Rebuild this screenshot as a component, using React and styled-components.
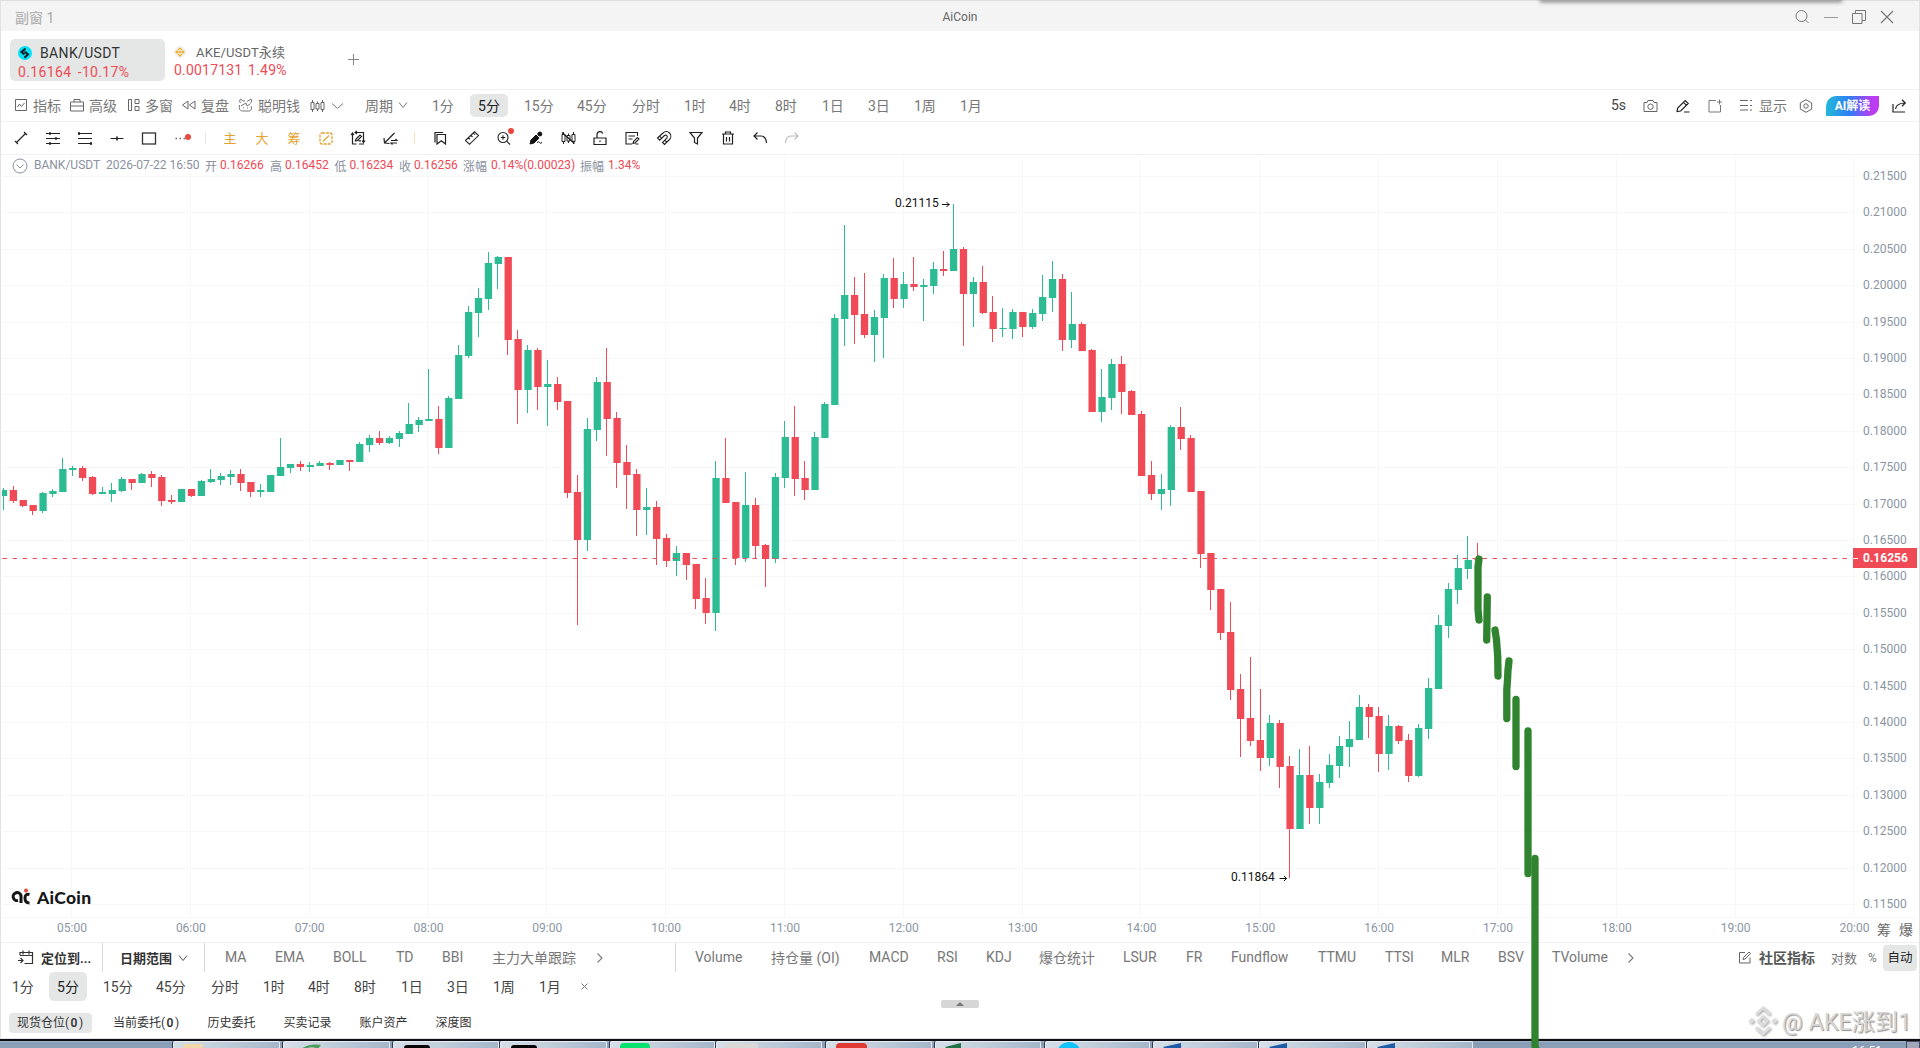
import styled, { createGlobalStyle, css } from 'styled-components';

const UP = '#2dbb93';
const DOWN = '#ef4a55';

const GlobalStyle = createGlobalStyle`
  * { box-sizing: border-box; }
  html, body { margin: 0; padding: 0; overflow: hidden; }
  body {
    font-family: Roboto, "Noto Sans CJK SC", sans-serif;
    font-size: 14px;
    color: #777;
    background: #fff;
  }
`;

let Window = styled.div`
  position: relative;
  display: flex;
  flex-direction: column;
  width: 1920px;
  height: 1048px;
  overflow: hidden;
  background: #fff;
`;

let Frame = styled.div`
  display: flex;
  flex-direction: column;
  height: 1039px;
  border: 1px solid #e2e2e2;
  border-top: 1px solid #dedede;
`;

// top bar
let TitleBar = styled.div`
  position: relative;
  display: flex;
  align-items: center;
  justify-content: space-between;
  height: 30px;
  padding: 1px 24px 0 14px;
  background: #f4f4f4;
  color: #aaa;
`;

let TitleText = styled.div`
  font-size: 12px;
  color: #666;
  flex: 1;
  padding-left: 10px;
  text-align: center;
`;

let TitleSide = styled.div`
  display: flex;
  align-items: center;
  justify-content: ${props => props.$end ? 'flex-end' : 'flex-start'};
  gap: 12px;
  width: 160px;
`;

let WindowShadow = styled.div`
  position: absolute;
  top: -2px;
  left: 1540px;
  width: 300px;
  height: 2px;
  background: #a5a5a5;
  box-shadow: 0 0 4px 1px #777;
`;

// coin tabs
let CoinTabs = styled.div`
  display: flex;
  align-items: flex-start;
  height: 59px;
  padding: 8px 0 0 9px;
  border-bottom: 1px solid #f0f0f0;
`;

let CoinTab = styled.div`
  width: ${props => props.$w}px;
  height: 42px;
  padding: ${props => props.$active ? '5px 0 0 8px' : '4px 0 0 9px'};
  border-radius: 5px;
  background: ${props => props.$active ? '#e5e7e7' : 'none'};
`;

let CoinName = styled.div`
  display: flex;
  align-items: center;
  gap: ${props => props.$gap}px;
  height: ${props => props.$active ? 18 : 17}px;
  font-size: ${props => props.$active ? 14 : 13}px;
  color: ${props => props.$active ? '#333' : '#666'};
  letter-spacing: ${props => props.$active ? 0.35 : 0.15}px;
  white-space: nowrap;
`;

let CoinPrice = styled.div`
  height: 20px;
  line-height: 20px;
  color: ${DOWN};
  letter-spacing: ${props => props.$ls}px;
  word-spacing: ${props => props.$ws}px;
  white-space: pre;
`;

let AddTab = styled.div`
  padding: 14px 0 0 60px;
  line-height: 0;
`;

// toolbars
let Toolbar = styled.div`
  display: flex;
  align-items: center;
  height: ${props => props.$h || 32}px;
  padding-left: ${props => props.$pl || 0}px;
  border-bottom: 1px solid #f1f1f1;
`;

let Tool = styled.div`
  display: flex;
  align-items: center;
  width: ${props => props.$w}px;
  gap: ${props => props.$gap || 0}px;
  height: 24px;
  padding-bottom: ${props => props.$lift ? 1 : 0}px;
  white-space: nowrap;
  font-size: ${props => props.$size || 14}px;
  color: ${props => props.$color || '#777'};
  font-weight: ${props => props.$bold ? 700 : 400};
`;

let Period = styled.div`
  display: flex;
  align-items: center;
  flex: none;
  width: ${props => props.$w}px;
  height: ${props => props.$h || 23}px;
  padding-bottom: 2px;
  white-space: nowrap;
  color: ${props => props.$color || '#777'};
  ${props => props.$active && css`
    justify-content: center;
    color: #222;
    background: #e5e7e7;
    border-radius: 5px;
    margin: 0 ${props.$mr}px 0 -8px;
  `}
`;

let Spacer = styled.div`
  flex: 1;
`;

let AiButton = styled.div`
  width: 53px;
  height: 20px;
  margin-right: 13px;
  line-height: 20px;
  text-align: center;
  font-size: 12px;
  font-weight: 700;
  color: #fff;
  border-radius: 10px 0 10px 0;
  background: linear-gradient(90deg, #22b9d8 0%, #2f7df5 45%, #b63df5 85%, #c23af0 100%);
`;

let DrawCell = styled.div`
  position: relative;
  display: flex;
  align-items: center;
  justify-content: center;
  width: 32px;
  height: 24px;
  padding-bottom: ${props => props.$gold ? 1 : 0}px;
  font-size: 13px;
  color: ${props => props.$gold ? '#e3a32f' : '#222'};
`;

let DrawDivider = styled.div`
  width: 1px;
  height: 12px;
  margin: 0 ${props => props.$mr || 8}px 0 8px;
  background: ${props => props.$color || '#e4e8ee'};
`;

let RedDot = styled.i`
  position: absolute;
  top: ${props => props.$top}px;
  right: 6px;
  width: 6px;
  height: 6px;
  border-radius: 50%;
  background: #e8483f;
`;

// chart
let ChartArea = styled.div`
  position: relative;
  height: 787px;
`;

let ChartInfo = styled.div`
  position: absolute;
  top: 1px;
  left: 11px;
  display: flex;
  align-items: center;
  height: 18px;
  font-size: 12px;
  color: #8a91a0;
  white-space: nowrap;
  svg { margin-right: 6px; position: relative; top: 1px; }
`;

let InfoPart = styled.span`
  width: ${props => props.$w}px;
  color: ${props => props.$red ? DOWN : '#8a91a0'};
`;

let ChartSvg = styled.svg`
  display: block;
  margin-left: -1px;
  font-family: Roboto, "Noto Sans CJK SC", sans-serif;
  font-size: 12px;
`;

let Logo = styled.div`
  position: absolute;
  left: 10px;
  top: 730px;
  display: flex;
  align-items: center;
  gap: 6px;
  height: 24px;
  font-family: Lato, sans-serif;
  font-weight: 900;
  font-size: 17.5px;
  letter-spacing: 0.3px;
  color: #161616;
`;

// bottom
let IndicatorBar = styled.div`
  display: flex;
  align-items: center;
  height: 30px;
  padding-left: 16px;
  border-top: 1px solid #efefef;
`;

let Divider = styled.div`
  width: 1px;
  height: 29px;
  background: #d9d9d9;
  margin-right: ${props => props.$mr}px;
`;

let AutoButton = styled.div`
  width: 34px;
  height: 26px;
  margin-right: 2px;
  line-height: 25px;
  text-align: center;
  font-size: 12.5px;
  color: #222;
  border-radius: 4px;
  background: #e5e7e7;
`;

let BottomPeriods = styled.div`
  display: flex;
  align-items: center;
  height: 29px;
  padding-left: 11px;
`;

let PanelHandle = styled.div`
  width: 38px;
  height: 8px;
  margin: -1px auto 0 940px;
  border-radius: 2px;
  background: #d6d6d6;
  line-height: 0;
  text-align: center;
`;

let OrderTabs = styled.div`
  display: flex;
  align-items: center;
  height: 20px;
  margin-top: 5px;
  padding-left: 8px;
  font-size: 12px;
  color: #333;
`;

let OrderTab = styled.div`
  height: 20px;
  line-height: 21px;
  width: ${props => props.$w}px;
  flex: none;
  white-space: nowrap;
  ${props => props.$active && css`
    padding-left: 8px;
    margin-right: 21px;
    border-radius: 4px;
    background: #e5e7e7;
  `}
  b { font-weight: 600; letter-spacing: 1.5px; margin-left: 1.5px; }
`;

let Watermark = styled.div`
  position: absolute;
  left: 1748px;
  top: 1004px;
  display: flex;
  align-items: center;
  gap: 4px;
  height: 32px;
  font-size: 23px;
  letter-spacing: 0.2px;
  color: #d6d6d6;
  text-shadow: 1px 1px 1px #8f8f8f;
  white-space: nowrap;
  svg { position: relative; top: 1px; filter: drop-shadow(1px 1px 1px #9a9a9a); }
`;

let Marker = styled.svg`
  position: absolute;
  left: 1460px;
  top: 540px;
  pointer-events: none;
`;

let Taskbar = styled.div`
  display: flex;
  height: 9px;
  border-top: 2px solid #0b0d12;
  background: linear-gradient(#a3b4c8 0, #879cb6 2px, #8ba1ba 100%);
  overflow: hidden;
`;

let TaskStart = styled.div`
  width: 173px;
  height: 7px;
  flex: none;
`;

let TaskButton = styled.div`
  flex: none;
  width: ${props => props.$w}px;
  height: 8px;
  border: 1px solid #e8edf3;
  border-bottom: 0;
  border-radius: 2px 2px 0 0;
  box-shadow: -1px 0 0 #2c3648;
  margin-right: ${props => props.$mr}px;
  padding-left: 9px;
  line-height: 0;
  background: linear-gradient(100deg, #d6dfe8 0%, #bccad8 55%, #a5b6cb 100%);
`;

let TrayClock = styled.div`
  flex: 1;
  padding: 3px 0 0 378px;
  font-size: 12px;
  line-height: 14px;
  color: #fff;
`;

let ShowDesktop = styled.div`
  width: 14px;
  height: 8px;
  border: 1px solid #454f60;
  background: #a1a7b8;
`;

let Svg = styled.svg`
  flex: none;
`;

function Icon({ w = 16, h = 16, color = 'currentColor', sw = 1, children, fill = 'none' }) {
  return (
    <Svg width={w} height={h} viewBox={`0 0 ${w} ${h}`} fill={fill} stroke={color} strokeWidth={sw}>
      {children}
    </Svg>
  );
}

function Chevron({ w = 12, color = '#777' }) {
  return (
    <Icon w={w} h={8} color={color}><path d={`M1 1.5 L${w / 2} 6.5 L${w - 1} 1.5`} /></Icon>
  );
}

function ChevronRight() {
  return <Icon w={8} h={12} sw={1.1}><path d="M1.5 1.5 L6 6 L1.5 10.5" /></Icon>;
}

// [direction, high, body top, body bottom, low], 5 minutes each, from 04:25
let candles = [
  ['u', 488, 490, 496, 510], ['d', 486, 490, 501, 503], ['d', 500, 500, 506, 507], ['d', 505, 505, 511, 515],
  ['u', 492, 493, 511, 513], ['u', 489, 491, 494, 497], ['u', 458, 469, 492, 492], ['u', 466, 468, 470, 476],
  ['d', 466, 468, 478, 481], ['d', 476, 477, 494, 495], ['u', 487, 492, 494, 494], ['u', 483, 490, 494, 502],
  ['u', 477, 479, 491, 492], ['d', 479, 479, 483, 490], ['u', 473, 474, 483, 483], ['d', 471, 474, 478, 487],
  ['d', 475, 477, 501, 506], ['d', 495, 500, 502, 504], ['u', 489, 489, 502, 502], ['d', 489, 489, 496, 497],
  ['u', 480, 481, 496, 496], ['u', 469, 479, 482, 483], ['u', 473, 476, 480, 485], ['u', 470, 474, 477, 485],
  ['d', 469, 474, 483, 491], ['d', 482, 482, 492, 497], ['u', 484, 490, 492, 497], ['u', 475, 475, 492, 492],
  ['u', 438, 467, 476, 476], ['u', 464, 464, 468, 473], ['d', 461, 464, 467, 471], ['u', 462, 465, 467, 472],
  ['u', 461, 463, 466, 466], ['d', 462, 463, 465, 470], ['u', 460, 460, 465, 465], ['d', 460, 460, 462, 471],
  ['u', 442, 444, 462, 462], ['u', 435, 438, 445, 452], ['d', 431, 438, 443, 445], ['u', 436, 438, 443, 444],
  ['u', 431, 433, 439, 447], ['u', 403, 424, 434, 434], ['u', 417, 420, 425, 432], ['u', 369, 419, 421, 421],
  ['d', 406, 419, 448, 454], ['u', 396, 398, 448, 448], ['u', 345, 355, 399, 399], ['u', 306, 312, 356, 358],
  ['u', 288, 298, 313, 337], ['u', 252, 263, 299, 310], ['u', 256, 257, 264, 289], ['d', 257, 257, 340, 355],
  ['d', 330, 339, 390, 424], ['u', 345, 350, 390, 413], ['d', 348, 350, 387, 410], ['u', 360, 384, 387, 426],
  ['d', 377, 384, 402, 410], ['d', 401, 401, 493, 498], ['d', 475, 492, 540, 625], ['u', 418, 429, 540, 551],
  ['u', 377, 382, 430, 441], ['d', 348, 382, 419, 456], ['d', 412, 418, 463, 488], ['d', 445, 462, 475, 509],
  ['d', 469, 474, 510, 536], ['u', 488, 507, 510, 535], ['d', 501, 507, 539, 565], ['d', 534, 538, 561, 567],
  ['u', 546, 553, 561, 576], ['d', 553, 553, 565, 580], ['d', 564, 564, 599, 609], ['d', 578, 598, 613, 624],
  ['u', 461, 478, 613, 631], ['d', 438, 478, 503, 503], ['d', 502, 502, 558, 565], ['u', 472, 505, 558, 562],
  ['d', 498, 505, 546, 559], ['d', 544, 545, 559, 587], ['u', 473, 477, 559, 563], ['u', 421, 437, 478, 488],
  ['d', 406, 437, 479, 496], ['d', 461, 478, 490, 500], ['u', 432, 437, 490, 490], ['u', 402, 404, 438, 438],
  ['u', 314, 318, 405, 405], ['u', 225, 295, 319, 346], ['d', 277, 295, 315, 344], ['d', 273, 314, 335, 338],
  ['u', 310, 317, 335, 362], ['u', 274, 278, 318, 358], ['d', 258, 278, 299, 308], ['u', 272, 284, 299, 308],
  ['d', 257, 284, 287, 291], ['u', 279, 285, 287, 321], ['u', 262, 269, 286, 294], ['d', 251, 269, 271, 276],
  ['u', 204, 249, 271, 271], ['d', 247, 249, 294, 346], ['u', 277, 282, 294, 327], ['d', 266, 282, 313, 314],
  ['d', 296, 312, 329, 342], ['u', 308, 328, 329, 337], ['u', 309, 312, 329, 339], ['d', 312, 312, 327, 337],
  ['u', 309, 313, 327, 329], ['u', 275, 297, 314, 321], ['u', 261, 279, 298, 312], ['d', 274, 279, 340, 351],
  ['u', 292, 324, 340, 348], ['d', 322, 324, 351, 351], ['d', 349, 350, 412, 412], ['u', 369, 397, 412, 422],
  ['u', 359, 364, 398, 410], ['d', 356, 364, 392, 414], ['d', 390, 391, 415, 415], ['d', 411, 414, 476, 476],
  ['d', 461, 475, 494, 500], ['u', 474, 489, 494, 510], ['u', 425, 427, 490, 506], ['d', 407, 427, 439, 450],
  ['d', 435, 438, 492, 492], ['d', 491, 491, 554, 568], ['d', 553, 553, 590, 610], ['d', 589, 589, 633, 640],
  ['d', 602, 632, 690, 700], ['d', 674, 689, 719, 757], ['d', 657, 718, 741, 746], ['d', 689, 740, 758, 771],
  ['u', 715, 723, 758, 766], ['d', 720, 723, 767, 788], ['d', 756, 766, 829, 878], ['u', 749, 775, 829, 829],
  ['d', 746, 775, 808, 824], ['u', 774, 782, 808, 824], ['u', 754, 765, 783, 788], ['u', 736, 746, 766, 778],
  ['u', 721, 739, 747, 767], ['u', 695, 707, 740, 740], ['d', 704, 707, 717, 738], ['d', 707, 716, 754, 772],
  ['u', 715, 726, 754, 770], ['d', 725, 726, 741, 744], ['d', 734, 740, 776, 782], ['u', 724, 728, 776, 777],
  ['u', 678, 688, 729, 739], ['u', 615, 625, 689, 689], ['u', 583, 589, 626, 638], ['u', 555, 568, 590, 604],
  ['u', 536, 560, 569, 579], ['d', 543, 558, 560, 570],
];

let hours = Array.from({ length: 16 }, (_, i) => String(i + 5).padStart(2, '0') + ':00');
let prices = Array.from({ length: 21 }, (_, i) => (0.215 - i * 0.005).toFixed(5));

function Chart() {
  return (
    <ChartSvg width="1919" height="787" viewBox="0 155 1919 787">
      <g fill="#f7f7f7">
        {hours.map((t, i) => <rect key={t} x={Math.floor(71.4 + i * 118.83)} y="157" width="1" height="761" />)}
        {prices.map((p, i) => <rect key={p} x="2" y={Math.round(176 + i * 36.4)} width="1856" height="1" />)}
        <rect x="2" y="917" width="1914" height="1" />
      </g>
      {candles.map(([dir, high, top, bottom, low], i) => {
        let x = 72.4 + (i - 7) * 9.897;
        let left = Math.max(2, x - 3.3);
        return (
          <g key={i} fill={dir == 'u' ? UP : DOWN}>
            <rect x={Math.floor(x)} y={high} width="1" height={low - high} />
            <rect x={left} y={top} width={x + 4 - left} height={bottom - top} />
          </g>
        );
      })}
      <path d="M2.5 558.5 H1853" stroke={DOWN} strokeDasharray="4.5 5.5" />
      <g fill="#8a95a3">
        {prices.map((p, i) => <text key={p} x="1863" y={180 + i * 36.4}>{p}</text>)}
        {hours.map((t, i) => <text key={t} x={72 + i * 118.83} y="932" textAnchor="middle">{t}</text>)}
      </g>
      <rect x="1853" y="548" width="64" height="20" fill={DOWN} />
      <path d="M1853 558.5 h5" stroke="#fff" />
      <text x="1863" y="562" fill="#fff" fontWeight="700">0.16256</text>
      <g fill="#111">
        <text x="895" y="207">0.21115</text>
        <text x="1231" y="881">0.11864</text>
      </g>
      <g stroke="#111" fill="none">
        <path d="M942 204.5 h7.500 M946.500 202 l2.500 2.500 l-2.500 2.500" />
        <path d="M1279.500 878.500 h7.500 M1284 876 l2.500 2.500 l-2.500 2.500" />
      </g>
      <g fill="#666" fontSize="14">
        <text x="1877" y="935">筹</text>
        <text x="1899" y="935">爆</text>
      </g>
    </ChartSvg>
  );
}

// [label, width up to the next label]
let topPeriods = [
  ['1分', 46], ['5分', 38, 16], ['15分', 53], ['45分', 55], ['分时', 52], ['1时', 45], ['4时', 46],
  ['8时', 47], ['1日', 46], ['3日', 46], ['1周', 46], ['1月', 40],
];
let bottomPeriods = [
  ['1分', 45], ['5分', 38, 16], ['15分', 53], ['45分', 55], ['分时', 52], ['1时', 45], ['4时', 46],
  ['8时', 47], ['1日', 46], ['3日', 46], ['1周', 46], ['1月', 41],
];
let mainIndicators = [['MA', 50], ['EMA', 58], ['BOLL', 63], ['TD', 46], ['BBI', 50], ['主力大单跟踪', 104]];
let subIndicators = [
  ['Volume', 76], ['持仓量 (OI)', 98], ['MACD', 68], ['RSI', 49], ['KDJ', 53], ['爆仓统计', 84], ['LSUR', 63],
  ['FR', 45], ['Fundflow', 87], ['TTMU', 67], ['TTSI', 56], ['MLR', 57], ['BSV', 54], ['TVolume', 75],
];
let info = [
  ['BANK/USDT', 72], ['2026-07-22 16:50', 99], ['开', 15], ['0.16266', 50, 1], ['高', 15], ['0.16452', 49.5, 1],
  ['低', 15], ['0.16234', 49.5, 1], ['收', 15], ['0.16256', 49, 1], ['涨幅', 28], ['0.14%(0.00023)', 89, 1],
  ['振幅', 28], ['1.34%', 40, 1],
];

function PeriodList({ list, h, color }) {
  return list.map(([name, w, mr]) => (
    <Period key={name} $w={w} $mr={mr} $active={mr !== undefined} $h={h} $color={color}>{name}</Period>
  ));
}

function Candles3({ slash }) {
  return (
    <Icon color={slash ? '#222' : '#666'}>
      <path d="M3.500 2 v2 M3.500 12 v2 M8.500 3.500 v2 M8.500 11 v2 M13.500 2 v2 M13.500 12 v2" />
      <path d="M2 4.500 h3 v7 h-3 z M7 5.500 h3 v5.500 h-3 z M12 4.500 h3 v7 h-3 z" />
      {slash && <path d="M2 2.500 L14.500 13.500" strokeWidth="1.500" />}
    </Icon>
  );
}

function DrawBar() {
  return (
    <Toolbar $pl={4} $h={33}>
      <DrawCell><Icon><path d="M3.500 12.500 L12.500 3.500 M2 11 l3 3 M11 2 l3 3" strokeWidth="1.200" /></Icon></DrawCell>
      <DrawCell><Icon><path d="M1 3.500 h14 M1 8.500 h14 M1 13.500 h14" /><path d="M5 2 v3 M11 7 v3 M5 12 v3" strokeWidth="1.400" /></Icon></DrawCell>
      <DrawCell><Icon><path d="M1 3.500 h14 M1 8.500 h14 M1 13.500 h14" /><path d="M2 2 v3 M14 12 v3" strokeWidth="1.600" /></Icon></DrawCell>
      <DrawCell><Icon><path d="M1.500 8.500 h13" /><path d="M8 6.500 v4" strokeWidth="1.600" /></Icon></DrawCell>
      <DrawCell><Icon color="#333"><rect x="1.500" y="3" width="13" height="11" strokeWidth="1.300" /></Icon></DrawCell>
      <DrawCell>
        <Icon color="#666"><path d="M2.500 8.500 h1.500 M6.500 8.500 h1.500 M10.500 8.500 h1.500" strokeWidth="1.300" /></Icon>
        <RedDot $top={8} />
      </DrawCell>
      <DrawDivider />
      <DrawCell $gold>主</DrawCell>
      <DrawCell $gold>大</DrawCell>
      <DrawCell $gold>筹</DrawCell>
      <DrawCell $gold><Icon><rect x="2" y="3" width="12" height="11" rx="2" strokeDasharray="3 1" strokeWidth="1.300" /><path d="M5 11.500 L11 5.500" strokeWidth="1.300" /></Icon></DrawCell>
      <DrawCell>
        <Icon sw={1.2}>
          <path d="M6.500 14 h-4 v-10.500 M1 5 l1.500 -2 l1.500 2 M4.500 2.500 h9 v9.500 M7 1 l-2 1.500 l2 1.500 M9 14 h5 M12 10.500 l1.500 2 l1.500 -2" />
          <path d="M5.500 11 l.5 -2 l4 -4 l1.500 1.500 l-4 4 z M8.500 10.800 h2.500" />
        </Icon>
      </DrawCell>
      <DrawCell><Icon sw={1.2}><path d="M3 12.500 L12.500 3 M2 8 l.5 5 l5 .5 M9 10.500 h6 l-1.500 -1.500 M15 13 h-6 l1.500 1.500" /></Icon></DrawCell>
      <DrawDivider $color="#f3e3c4" $mr={9} />
      <DrawCell><Icon sw={1.2}><path d="M3 12.500 v-10 h8" /><path d="M5 4.500 h8.500 v9.500 l-4.200 -3.200 l-4.300 3.200 z" /></Icon></DrawCell>
      <DrawCell><Icon sw={1.1}><path d="M1.500 10.500 L10.500 1.800 L14.500 5.600 L5.500 14.300 z M4.500 7.800 l1.500 1.500 M7 5.500 l1.500 1.500 M9.400 3.200 l1.500 1.500" /></Icon></DrawCell>
      <DrawCell>
        <Icon sw={1.1}><circle cx="7" cy="7.500" r="5" /><path d="M10.700 11.200 L14 14.500 M4.800 7.500 h4.400 M7 5.300 v4.400" /></Icon>
        <RedDot $top={2} />
      </DrawCell>
      <DrawCell>
        <Icon fill="#111" color="#111">
          <path d="M2 14 l1 -4 l5 -5 l3 3 l-5 5 z" /><circle cx="11.800" cy="4" r="2" />
          <path d="M9 12.500 q1.500 -1.500 2.500 0 t2.500 0" fill="none" />
        </Icon>
      </DrawCell>
      <DrawCell><Candles3 slash /></DrawCell>
      <DrawCell><Icon sw={1.2}><path d="M2 8 h12 v6.500 h-12 z M5 8 v-3.500 a3 3 0 0 1 5.800 -1 M8 10.500 v1.500" /></Icon></DrawCell>
      <DrawCell>
        <Icon sw={1.1}>
          <path d="M13.500 6 v-3.500 h-11.500 v11.500 h6 M4.500 6 h6.500 M4.500 9 h4" />
          <path d="M9 13.500 l.5 -2 l4 -4 l1.500 1.500 l-4 4 z M11.500 14 h3" />
        </Icon>
      </DrawCell>
      <DrawCell><Icon sw={1.1}><path d="M1.500 8 L7 3 A4.500 4.500 0 0 1 13.500 9.500 L8.500 14.500 L6.500 12.500 L11 8 A1.800 1.800 0 0 0 8.500 5.500 L3.700 10.200 z M3.500 6.200 l2 2 M8.700 10.200 l2 2" /></Icon></DrawCell>
      <DrawCell><Icon sw={1.2}><path d="M2 2.500 h12 l-4.500 5.500 v6 l-3 -1.500 v-4.500 z" /></Icon></DrawCell>
      <DrawCell><Icon sw={1.2}><path d="M2 4 h12 M5.500 4 v-2 h5 v2 M3.500 4 v10 h9 v-10 M6.500 7 v4.500 M9.500 7 v4.500" /></Icon></DrawCell>
      <DrawCell><Icon sw={1.2}><path d="M5.500 2.500 L2 6 L5.500 9.500 M2 6 h7 q5 0 5.500 7" /></Icon></DrawCell>
      <DrawCell><Icon sw={1.1} color="#bbb"><path d="M10.500 2.500 L14 6 L10.500 9.500 M14 6 h-7 q-5 0 -5.500 7" /></Icon></DrawCell>
    </Toolbar>
  );
}

function TopBar() {
  return (
    <Toolbar $pl={13}>
      <Tool $lift $w={56} $gap={5}>
        <Icon w={14} h={14} color="#666"><path d="M1.500 1.500 h11 v11 h-11 z M3.500 9 l2 -3 l2 2.500 l3 -3.500" /></Icon>指标
      </Tool>
      <Tool $lift $w={56} $gap={5}>
        <Icon w={14} h={14} color="#666"><path d="M.5 4 h13 v9 h-13 z M4 4 v-2.500 h6 v2.500 M.5 8 h13" /></Icon>高级
      </Tool>
      <Tool $lift $w={55} $gap={5}>
        <Icon w={14} h={14} color="#666"><path d="M2.500 1.500 h3 v11 h-3 z M9 1.500 h4 v4 h-4 z M9 8.500 h4 v4 h-4 z" /></Icon>多窗
      </Tool>
      <Tool $lift $w={57} $gap={5}>
        <Icon w={15} h={14} color="#666"><path d="M7 3 L1.500 7 L7 11 z M14 3 L8.500 7 L14 11 z" /></Icon>复盘
      </Tool>
      <Tool $lift $w={71} $gap={5}>
        <Icon w={15} h={14} color="#777">
          <path d="M2.500 5 q-2 -2 0 -4 l2.500 2 h2 M9 3.500 l4 -2.500 q1.500 2 -.5 4.500 M1.500 7 q-1 6 3 6 h7 q3 -1 1.500 -5 M3 8 l5 -3 l1 3 l3 -2 M5 10 h1 M9 10 h1" />
        </Icon>聪明钱
      </Tool>
      <Tool $w={56} $gap={6}><Candles3 /><Chevron w={13} /></Tool>
      <Tool $lift $w={67} $gap={5}>周期<Chevron w={10} /></Tool>
      <PeriodList list={topPeriods} />
      <Spacer />
      <Tool $lift $w={32} $color="#444">5s</Tool>
      <Tool $w={33}><Icon w={15} h={14} color="#666"><path d="M1 3.500 h3 l1 -2 h5 l1 2 h3 v9 h-13 z" /><circle cx="7.500" cy="7.700" r="2.700" /></Icon></Tool>
      <Tool $w={32}><Icon w={14} h={14} color="#222" sw={1.2}><path d="M1 12.500 l.7 -3.500 l7.500 -7.500 l3 3 l-7.500 7.500 z M7.500 3.300 l3 3 M8 13 h5.500" /></Icon></Tool>
      <Tool $w={32}><Icon w={14} h={14} color="#777"><path d="M8 1.500 h-7 v11.500 h11.500 v-7 M11.500 .5 v5 M9 3 h5" /></Icon></Tool>
      <Tool $lift $w={59} $gap={6}><Icon w={13} h={12} color="#666"><path d="M0 1.500 h8 M0 6.500 h8 M0 11 h8 M10 1.500 h2 M10 6.500 h2 M10 11 h2" /></Icon>显示</Tool>
      <Tool $w={27}><Icon w={14} h={14} color="#666"><path d="M7 .7 l5.700 3.200 v6.200 l-5.700 3.200 l-5.700 -3.200 v-6.200 z" /><circle cx="7" cy="7" r="2.200" /></Icon></Tool>
      <AiButton>AI解读</AiButton>
      <Tool $w={27}><Icon w={15} h={14} color="#222" sw={1.2}><path d="M1 5 v8 h12 M3.500 10 q1 -6 9.500 -6 M10 .8 l3.300 3.200 l-3.300 3.200" /></Icon></Tool>
    </Toolbar>
  );
}

// [width, gap after, glyph]
let tasks = [
  [107, 3, <rect x="0" y="2" width="20" height="6" rx="2" fill="#f3d9a9" />],
  [107, 3, <path d="M6 8 Q16 1 28 3 L24 8 h-4 l3 -2 Q16 4 12 8 z" fill="#4c9f5a" />],
  [106, 1, <rect x="1" y="3" width="26" height="8" rx="3" fill="#050505" />],
  [107, 3, <rect x="1" y="3" width="26" height="8" rx="3" fill="#050505" />],
  [105, 1, <rect x="0" y="1" width="30" height="9" rx="4" fill="#08e070" />],
  [106, 4, <rect x="0" y="1" width="32" height="9" rx="3" fill="#d8d8d6" />],
  [106, 3, <rect x="0" y="1" width="31" height="9" rx="4" fill="#df3b32" />],
  [106, 4, <path d="M0 5 L16 1 V8 H4 z" fill="#1f7245" />],
  [105, 3, <circle cx="14" cy="12" r="12" fill="#10c4fb" />],
  [105, 1, <path d="M0 5 L18 1 V8 H4 z" fill="#1f5aa6" />],
  [107, 1, <path d="M0 5 L18 1 V8 H4 z" fill="#1f5aa6" />],
  [106, 1, <path d="M0 5 L18 1 V8 H4 z" fill="#1f5aa6" />],
];

let markerLines = [
  'M1479 559 L1478 567 L1478 609 L1479 620',
  'M1487.300 597 L1486.700 640',
  'M1495 630 L1496.500 640 L1497.700 656 L1498 676',
  'M1509 661 L1508 670 L1507.500 680 L1506.800 690 L1506.800 718.500',
  'M1516 699.500 V766.500',
  'M1528 731 V873.500',
  'M1535 858.500 V1046 L1537 1052',
];

function App() {
  return (
    <>
      <GlobalStyle />
      <Window>
        <Frame>
          <TitleBar>
            <TitleSide>副窗 1</TitleSide>
            <TitleText>AiCoin</TitleText>
            <TitleSide $end>
              <Icon color="#777"><circle cx="6.500" cy="7" r="5.500" /><path d="M10.500 11 l3 3" /></Icon>
              <Icon color="#999"><path d="M1 8.500 h14" /></Icon>
              <Icon color="#777"><path d="M1.500 4.500 h9.500 v10 h-9.500 z M4.500 4.500 v-3 h10 v10 h-3.500" /></Icon>
              <Icon color="#777" sw={1.2}><path d="M2 2 L14 14 M14 2 L2 14" /></Icon>
            </TitleSide>
            <WindowShadow />
          </TitleBar>

          <CoinTabs>
            <CoinTab $active $w={155}>
              <CoinName $active $gap={8}>
                <Icon w={14} h={14} color="none">
                  <circle cx="7" cy="7" r="7" fill="#05e3f8" />
                  <path d="M7.500 2.500 L3.500 6 L6.500 8.500 M6.500 5.500 L10 8.300 L6.500 11.700" stroke="#101820" strokeWidth="2" />
                </Icon>
                BANK/USDT
              </CoinName>
              <CoinPrice $ls={0.35} $ws={2.5}>0.16164 -10.17%</CoinPrice>
            </CoinTab>
            <CoinTab $w={122}>
              <CoinName $gap={9}>
                <Icon w={13} h={14} color="none">
                  <circle cx="6" cy="7" r="6" fill="#f3f3f3" />
                  <path d="M6 3 l2 2 M8.300 5.300 M4 5 l2 -2 M2 7 l1 -1 l1 1 l-1 1 z M10 7 l-1 -1 l-1 1 l1 1 z M4 9 l2 2 l2 -2 M6 6.300 l.7 .7 l-.7 .7 l-.7 -.7 z" stroke="#efb135" strokeWidth="1.300" />
                </Icon>
                AKE/USDT永续
              </CoinName>
              <CoinPrice $ls={0.2} $ws={2}>0.0017131 1.49%</CoinPrice>
            </CoinTab>
            <AddTab><Icon w={12} h={12} color="#888"><path d="M1 6.500 h11 M6.500 1 v11" /></Icon></AddTab>
          </CoinTabs>

          <TopBar />
          <DrawBar />

          <ChartArea>
            <Chart />
            <ChartInfo>
              <Icon color="#8a91a0"><circle cx="8" cy="8" r="7" /><path d="M4.500 6.500 L8 10 L11.500 6.500" /></Icon>
              {info.map(([text, w, red], i) => <InfoPart key={i} $w={w} $red={red}>{text}</InfoPart>)}
            </ChartInfo>
            <Logo>
              <Icon w={20} h={18} color="#161616" sw={3}>
                <path d="M10 15 V7.500 a4 4 0 1 0 -3 5 M18.500 6.500 q-4.500 -1 -4.500 3.500 q0 5 4.500 5" />
                <circle cx="15" cy="2.500" r="2" fill="#e8483f" stroke="none" />
              </Icon>
              AiCoin
            </Logo>
          </ChartArea>

          <IndicatorBar>
            <Tool $w={85} $gap={7} $color="#333" $bold $size={13}>
              <Icon w={17} h={16} color="#333"><path d="M3 5 v-2.500 h12.500 v11 h-8 M3 5.500 h12.500 M6 .5 v4 M12 .5 v4 M1 10.500 h4.500 M3.500 8 l2.500 2.500 l-2.500 2.500" strokeWidth="1.200" /></Icon>
              定位到...
            </Tool>
            <Divider $mr={17} />
            <Tool $w={84} $gap={6} $color="#333" $bold $size={13}>日期范围<Chevron w={10} color="#555" /></Tool>
            <Divider $mr={20} />
            {mainIndicators.map(([name, w]) => <Tool $lift key={name} $w={w}>{name}</Tool>)}
            <Tool $w={79}><ChevronRight /></Tool>
            <Divider $mr={19} />
            {subIndicators.map(([name, w]) => <Tool $lift key={name} $w={w}>{name}</Tool>)}
            <ChevronRight />
            <Spacer />
            <Tool $lift $w={93} $gap={8} $color="#555" $bold>
              <Icon w={13} h={13} color="#666"><path d="M7 1.500 h-5.500 v10.500 h10.500 v-5.500 M5 8.500 l.5 -2 l5.500 -5.500 l1.500 1.500 l-5.500 5.500 z" /></Icon>
              社区指标
            </Tool>
            <Tool $w={37} $size={13}>对数</Tool>
            <Tool $w={15} $size={12}>%</Tool>
            <AutoButton>自动</AutoButton>
          </IndicatorBar>

          <BottomPeriods>
            <PeriodList list={bottomPeriods} h={29} color="#444" />
            <Icon w={9} h={9} color="#777"><path d="M1.500 1.500 l6 6 M7.500 1.500 l-6 6" /></Icon>
          </BottomPeriods>
          <PanelHandle>
            <Icon w={8} h={8} color="none"><path d="M0 6 L4 2 L8 6 z" fill="#777" /></Icon>
          </PanelHandle>
          <OrderTabs>
            <OrderTab $active $w={83}>现货仓位(<b>0</b>)</OrderTab>
            <OrderTab $w={94.5}>当前委托(<b>0</b>)</OrderTab>
            {['历史委托', '买卖记录', '账户资产', '深度图'].map(t => <OrderTab key={t} $w={76}>{t}</OrderTab>)}
          </OrderTabs>
        </Frame>

        <Taskbar>
          <TaskStart>
            <svg width="173" height="7">
              <circle cx="27" cy="17" r="15" fill="#b9cfe4" stroke="#2a5b93" strokeWidth="1.500" />
              <path d="M80 8 Q88 1 98 3 L94 8 z" fill="#f1bf2b" />
              <path d="M84 8 Q90 4 95 7 z" fill="#2c67c4" />
              <rect x="128" y="2" width="30" height="9" rx="4" fill="#fff" />
            </svg>
          </TaskStart>
          {tasks.map(([w, mr, glyph], i) => (
            <TaskButton key={i} $w={w} $mr={mr}><svg width="36" height="7">{glyph}</svg></TaskButton>
          ))}
          <TrayClock>16:51</TrayClock>
          <ShowDesktop />
        </Taskbar>

        <Watermark>
          <Icon w={30} h={30} color="#dcdcdc" sw={2.6}>
            <path d="M8 8.500 L15 2 L22 8.500 M8 21.500 L15 28 L22 21.500" />
            <path d="M15 10.500 l4.500 4.500 l-4.500 4.500 l-4.500 -4.500 z" strokeWidth="2.200" />
            <path d="M3.500 12 l3 3 l-3 3 l-3 -3 z M26.500 12 l3 3 l-3 3 l-3 -3 z" fill="#dcdcdc" stroke="none" />
          </Icon>
          @ AKE涨到1
        </Watermark>

        <Marker width="100" height="508" viewBox="1460 540 100 508" fill="none" stroke="#30842f" strokeWidth="7.300" strokeLinecap="round" strokeLinejoin="round">
          {markerLines.map(d => <path key={d} d={d} />)}
        </Marker>
      </Window>
    </>
  );
}

export default App;
